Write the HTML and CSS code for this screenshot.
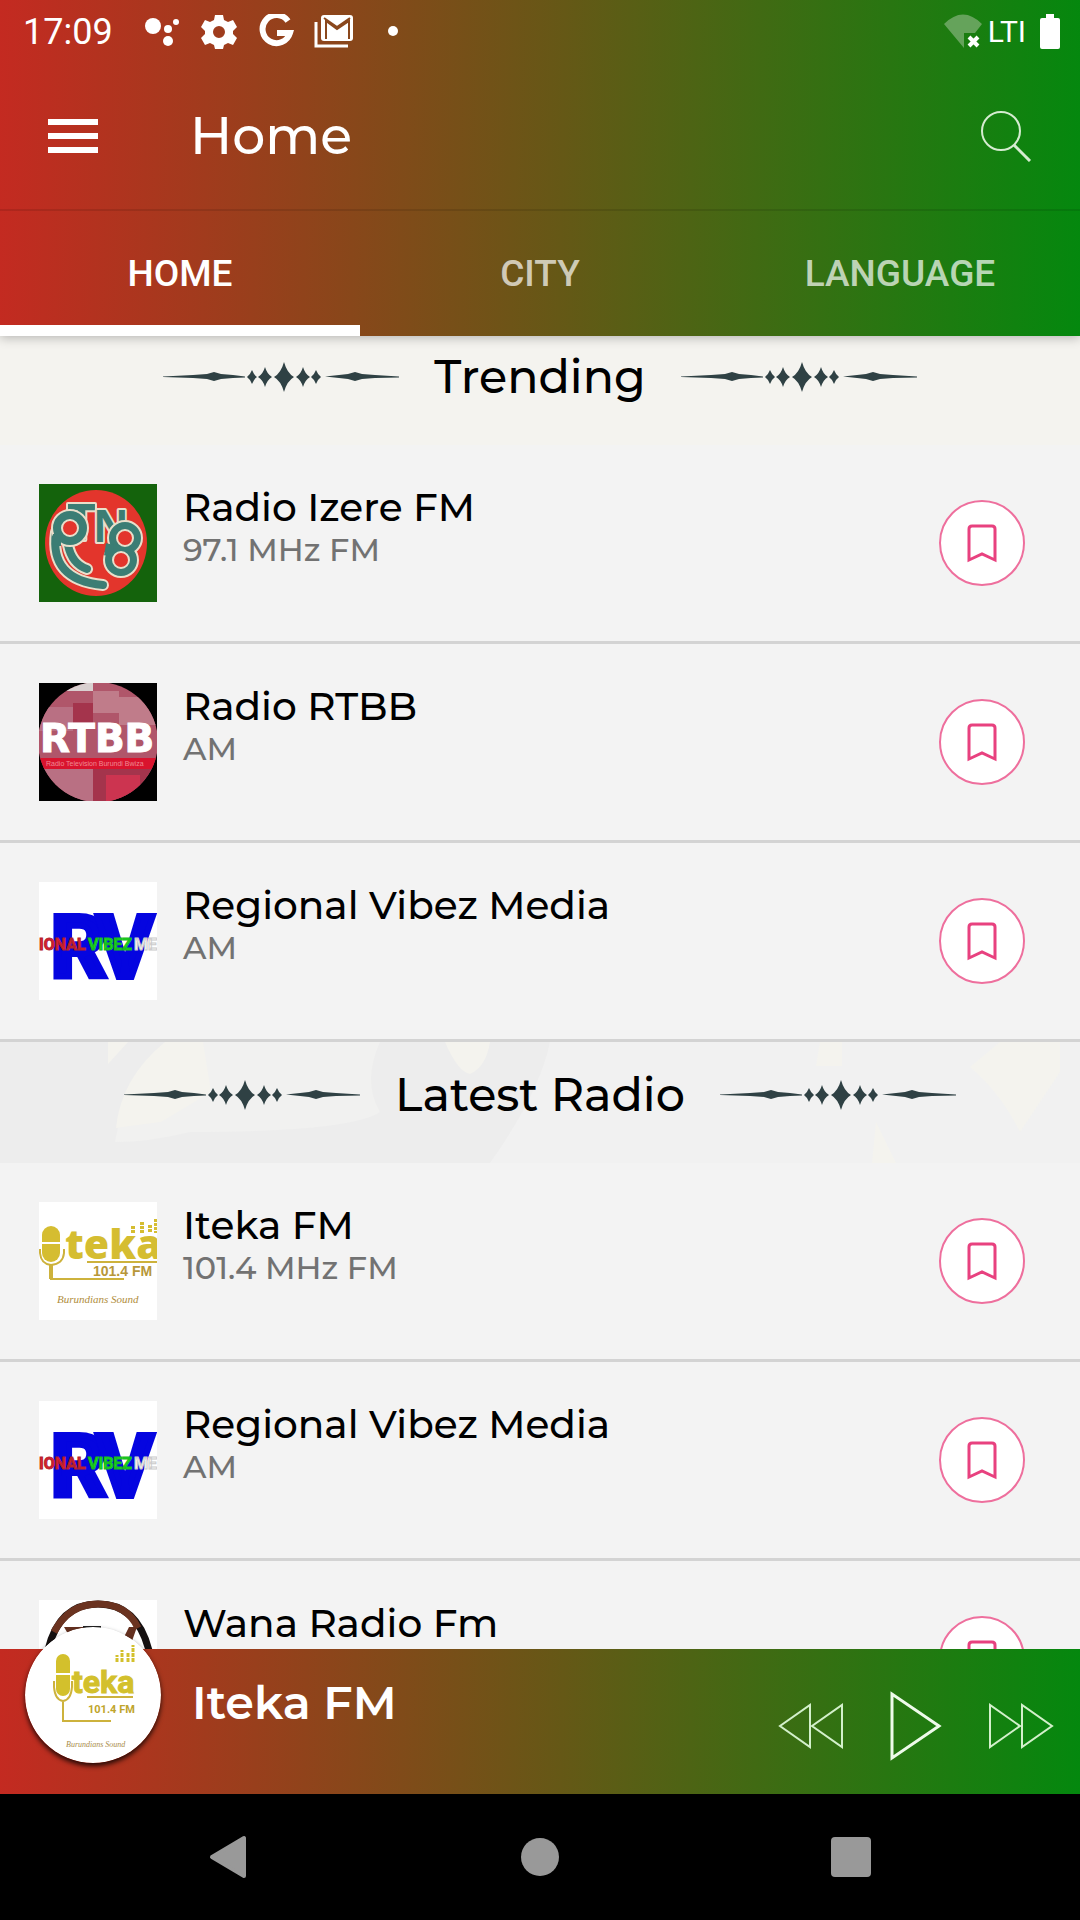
FILE: index.html
```
<!DOCTYPE html>
<html lang="en">
<head>
    <meta charset="UTF-8">
    <meta name="viewport" content="width=device-width, initial-scale=1.0">
    <title>Home</title>
    <link rel="stylesheet" href="styles.css">
</head>
<body>
    <!-- shared artwork -->
    <svg class="sprites" aria-hidden="true">
        <symbol id="bookmark" viewBox="0 0 32 40">
            <path d="M3 37V6q0-3 3-3h20q3 0 3 3v31l-13-6z" fill="none" stroke="#e8417f" stroke-width="3"/>
        </symbol>

        <symbol id="ornament" viewBox="0 0 236 30">
            <g fill="#2f4144">
                <path d="M0 14.500L30 13 44 12 51 10 58 12 70 13 82 14.500v1L70 16 58 17 51 19 44 17 30 16 0 15z"/>
                <path d="M162 14.500L176 13 185 12 192 10 199 12 212 13 236 14.500v1L212 16 199 17 192 19 185 17 176 16z"/>
                <path d="M89 8Q91 13 94 15 91 17 89 22 87 17 84 15 87 13 89 8z"/>
                <path d="M102 5Q104 12 109 15 104 18 102 25 100 18 95 15 100 12 102 5z"/>
                <path d="M121 0Q124 11 131 15 124 19 121 30 118 19 111 15 118 11 121 0z"/>
                <path d="M140 5Q142 12 147 15 142 18 140 25 138 18 133 15 138 12 140 5z"/>
                <path d="M153 8Q155 13 158 15 155 17 153 22 151 17 148 15 151 13 153 8z"/>
            </g>
        </symbol>

        <symbol id="logo-rv" viewBox="0 0 118 118">
            <rect width="118" height="118" fill="#fff"/>
            <g font-family="Roboto, sans-serif" font-weight="bold">
                <g font-size="86" fill="#0505e0" stroke="#0505e0" stroke-width="6">
                    <text x="12" y="95">R</text>
                    <text x="58" y="95">V</text>
                </g>
                <g font-size="16" stroke-width="1">
                    <text x="0" y="68" fill="#e0202a" stroke="#b0202f">IONAL</text>
                    <text x="49" y="68" fill="#18e01c" stroke="#18b822">VIBEZ</text>
                    <text x="95" y="68" fill="#fff" stroke="#ccc">ME</text>
                </g>
            </g>
        </symbol>

        <symbol id="logo-iteka" viewBox="0 0 118 118">
            <rect width="118" height="118" fill="#fff"/>
            <rect x="3" y="24" width="18" height="36" rx="9" fill="#d5bd31"/>
            <path d="M3 41h18" stroke="#fff" stroke-width="2"/>
            <path d="M1 47v4q1 11 11 12 12-1 13-12v-4M12 63v14h73M48 60h70" fill="none" stroke="#cdb23c" stroke-width="2"/>
            <path d="M12 63v14" stroke="#cdb23c" stroke-width="4"/>
            <path d="M94 24v7M103 20v11M111 23v8M117 17v14" stroke="#d5bd31" stroke-width="4" stroke-dasharray="3 1"/>
            <g font-family="Open Sans, sans-serif" fill="#d5bd31">
                <text x="26" y="57" font-size="41" font-weight="800">teka</text>
                <text x="54" y="74" font-family="Liberation Sans, sans-serif" font-size="14" font-weight="bold" fill="#b79739">101.4 FM</text>
                <text x="18" y="101" font-family="Liberation Serif, serif" font-size="11" font-style="italic" fill="#b08d3c">Burundians Sound</text>
            </g>
        </symbol>
    </svg>

    <header class="header">
        <div class="status-bar">
            <span class="clock">17:09</span>
            <svg class="notifications" viewBox="0 0 260 36" aria-hidden="true">
                <g fill="#fff">
                    <circle cx="9" cy="12" r="8"/>
                    <circle cx="24" cy="15" r="4"/>
                    <circle cx="24" cy="27" r="5"/>
                    <circle cx="32" cy="8" r="3"/>
                    <path fill-rule="evenodd" d="M71 1h8l1 5 4 2 5-2 4 7-4 4v3l4 4-4 7-5-2-4 2-1 4h-8l-1-4-4-2-5 2-4-7 4-4v-3l-4-4 4-7 5 2 4-2zM75 12a6 6 0 1 0 0 12a6 6 0 1 0 0-12z"/>
                    <path d="M180 1h26q3 0 3 3v20q0 3-3 3h-26q-3 0-3-3V4q0-3 3-3z"/>
                    <circle cx="249" cy="17" r="5"/>
                </g>
                <path d="M144 7A14 14 0 1 0 146 19H133" fill="none" stroke="#fff" stroke-width="6"/>
                <path d="M182 25V7l11 8 12-8v18M180 4l13 9 13-9" fill="none" stroke="#8a471c" stroke-width="2"/>
                <path d="M172 8v24h32" fill="none" stroke="#fff" stroke-width="3"/>
            </svg>
            <svg class="wifi" viewBox="0 0 40 36" aria-hidden="true">
                <path d="M0 10Q19-9 38 10L31 19H20V34z" fill="#65a35b"/>
                <path d="M25 23l9 9M34 23l-9 9" stroke="#fff" stroke-width="4"/>
            </svg>
            <span class="network">LTI</span>
            <svg class="battery" viewBox="0 0 20 36" aria-hidden="true">
                <path d="M6 0h8v4h4q2 0 2 2v27q0 2-2 2H2q-2 0-2-2V6q0-2 2-2h4z" fill="#fff"/>
            </svg>
        </div>

        <div class="toolbar">
            <button class="icon-button" type="button" aria-label="Open menu">
                <svg width="50" height="36" viewBox="0 0 50 36"><path d="M0 4h50M0 18h50M0 32h50" stroke="#fff" stroke-width="6"/></svg>
            </button>
            <h1>Home</h1>
            <button class="icon-button" type="button" aria-label="Search">
                <svg width="52" height="52" viewBox="0 0 52 52"><g fill="none" stroke="#d5ecd0" stroke-width="2"><circle cx="21" cy="21" r="19"/><path d="M34 35l16 16" stroke-width="3"/></g></svg>
            </button>
        </div>

        <nav class="tabs">
            <a class="tab active" href="#home">Home</a>
            <a class="tab" href="#city">City</a>
            <a class="tab" href="#language">Language</a>
        </nav>
    </header>

    <main class="content">
        <section class="trending" id="home">
            <div class="section-title">
                <svg class="ornament" aria-hidden="true"><use href="#ornament"/></svg>
                <h2>Trending</h2>
                <svg class="ornament" aria-hidden="true"><use href="#ornament"/></svg>
            </div>

            <ul class="stations">
                <li class="station">
                    <svg class="thumb" viewBox="0 0 118 118" aria-hidden="true">
                        <rect width="118" height="118" fill="#14630c"/>
                        <ellipse cx="57" cy="59" rx="51" ry="53" fill="#e3352c"/>
                        <!-- tails of the R sweep round the disc -->
                        <g fill="none" stroke-linecap="round">
                            <path d="M17 48Q10 96 64 101M29 61Q33 80 48 85" stroke="#e9dfcb" stroke-width="12"/>
                            <path d="M17 48Q10 96 64 101M29 61Q33 80 48 85" stroke="#3b7d74" stroke-width="8"/>
                        </g>
                        <g font-family="Open Sans, sans-serif" font-weight="bold" fill="#3b7d74" stroke="#e9dfcb" stroke-width="4" paint-order="stroke" stroke-linejoin="round">
                            <text x="28" y="56" font-size="50">T</text>
                            <text x="54" y="58" font-size="44">N</text>
                        </g>
                        <!-- bowls of the R and the B -->
                        <g fill="#e3352c">
                            <g stroke="#e9dfcb" stroke-width="14">
                                <circle cx="31" cy="44" r="12"/>
                                <circle cx="86" cy="54" r="11"/>
                                <circle cx="82" cy="76" r="11"/>
                            </g>
                            <g stroke="#3b7d74" stroke-width="10">
                                <circle cx="31" cy="44" r="12"/>
                                <circle cx="86" cy="54" r="11"/>
                                <circle cx="82" cy="76" r="11"/>
                            </g>
                            <g stroke="#e9dfcb" stroke-width="2">
                                <circle cx="31" cy="44" r="8"/>
                                <circle cx="86" cy="54" r="8"/>
                                <circle cx="82" cy="76" r="8"/>
                            </g>
                        </g>
                        <path d="M18 50v12M71 60l-2 12" stroke="#3b7d74" stroke-width="8"/>
                    </svg>
                    <div class="info">
                        <h3>Radio Izere FM</h3>
                        <p>97.1 MHz FM</p>
                    </div>
                    <button class="bookmark" type="button" aria-label="Bookmark Radio Izere FM"><svg><use href="#bookmark"/></svg></button>
                </li>
                <li class="station">
                    <svg class="thumb" viewBox="0 0 118 118" aria-hidden="true">
                        <clipPath id="disc"><circle cx="59" cy="59" r="60"/></clipPath>
                        <rect width="118" height="118" fill="#000"/>
                        <g clip-path="url(#disc)">
                            <rect width="118" height="118" fill="#b0566a"/>
                            <path d="M0 0h54v8H0z" fill="#d9d0d0"/>
                            <path d="M54 8h26v22H54zM80 14h38v28H80z" fill="#c07c8a"/>
                            <path d="M0 24h34v24H0zM0 84h54v34H0z" fill="#b97083"/>
                            <path d="M34 20h20v20H34zM54 84h64v34H54z" fill="#a4344c"/>
                            <path d="M67 92h34v26H67z" fill="#cc3450"/>
                            <rect y="75" width="118" height="11" fill="#d9142e"/>
                        </g>
                        <g fill="#fff">
                            <text x="1" y="69" font-family="DejaVu Sans, sans-serif" font-size="39" font-weight="bold" stroke="#fff">RTBB</text>
                            <text x="7" y="83" font-family="Liberation Sans, sans-serif" font-size="7" fill="#f08a94">Radio Television Burundi Bwiza</text>
                        </g>
                    </svg>
                    <div class="info">
                        <h3>Radio RTBB</h3>
                        <p>AM</p>
                    </div>
                    <button class="bookmark" type="button" aria-label="Bookmark Radio RTBB"><svg><use href="#bookmark"/></svg></button>
                </li>
                <li class="station">
                    <svg class="thumb" aria-hidden="true"><use href="#logo-rv"/></svg>
                    <div class="info">
                        <h3>Regional Vibez Media</h3>
                        <p>AM</p>
                    </div>
                    <button class="bookmark" type="button" aria-label="Bookmark Regional Vibez Media"><svg><use href="#bookmark"/></svg></button>
                </li>
            </ul>
        </section>

        <section class="latest">
            <div class="section-title">
                <svg class="backdrop" viewBox="0 0 1080 121" preserveAspectRatio="none" aria-hidden="true">
                    <rect width="1080" height="121" fill="#f1f1f1"/>
                    <path d="M0 0h550q-10 50-60 121H0z" fill="#ededed"/>
                    <path d="M170 0h210q-18 40 0 70-30 20-190 20-40 10-75 10 10-60 55-100z" fill="#f1f1f0"/>
                    <path d="M108 0h20l-20 22zM165 0h38l8 50-50 30-45 6q5-50 49-86zM445 0h45q-4 25-20 32-12-2-25-32zM1000 0h60v30l-40 60q-20-40-50-65zM820 0h22v24h-26zM876 80l20 41h-24z" fill="#f4f3ee"/>
                </svg>
                <svg class="ornament" aria-hidden="true"><use href="#ornament"/></svg>
                <h2>Latest Radio</h2>
                <svg class="ornament" aria-hidden="true"><use href="#ornament"/></svg>
            </div>

            <ul class="stations">
                <li class="station">
                    <svg class="thumb" aria-hidden="true"><use href="#logo-iteka"/></svg>
                    <div class="info">
                        <h3>Iteka FM</h3>
                        <p>101.4 MHz FM</p>
                    </div>
                    <button class="bookmark" type="button" aria-label="Bookmark Iteka FM"><svg><use href="#bookmark"/></svg></button>
                </li>
                <li class="station">
                    <svg class="thumb" aria-hidden="true"><use href="#logo-rv"/></svg>
                    <div class="info">
                        <h3>Regional Vibez Media</h3>
                        <p>AM</p>
                    </div>
                    <button class="bookmark" type="button" aria-label="Bookmark Regional Vibez Media"><svg><use href="#bookmark"/></svg></button>
                </li>
                <li class="station">
                    <svg class="thumb" viewBox="0 0 118 118" aria-hidden="true">
                        <rect width="118" height="118" fill="#fff"/>
                        <path d="M7 60Q16 4 59 4t53 56" fill="none" stroke="#151010" stroke-width="7"/>
                        <path d="M15 32Q30 4 59 4t40 24" fill="none" stroke="#6b3320" stroke-width="7"/>
                        <path d="M25 27h30l-8 12H32zM84 39l6-12h8l-5 14z" fill="#64301f"/>
                        <path d="M44 26h18v5H44z" fill="#222"/>
                    </svg>
                    <div class="info">
                        <h3>Wana Radio Fm</h3>
                    </div>
                    <button class="bookmark" type="button" aria-label="Bookmark Wana Radio Fm"><svg><use href="#bookmark"/></svg></button>
                </li>
            </ul>
        </section>
    </main>

    <footer class="player">
        <svg class="cover" viewBox="0 0 136 136" aria-hidden="true">
            <circle cx="68" cy="68" r="68" fill="#fff"/>
            <rect x="31" y="27" width="14" height="42" rx="7" fill="#d3c02c"/>
            <path d="M31 47h14" stroke="#fff" stroke-width="2"/>
            <path d="M29 54v6q1 13 9 14 8-1 9-14v-6M38 74v20h48M62 70h46" fill="none" stroke="#cdb23c" stroke-width="2"/>
            <path d="M92 35v-7M97 35V23M103 35v-9M108 35V18" stroke="#d3c02c" stroke-width="3" stroke-dasharray="4 1"/>
            <text x="47" y="66" font-family="Roboto, sans-serif" font-size="32" font-weight="bold" fill="#d3c02c" stroke="#d3c02c">teka</text>
            <text x="63" y="86" font-family="Roboto, sans-serif" font-size="11" font-weight="bold" fill="#c0a52c">101.4 FM</text>
            <text x="41" y="120" font-family="Liberation Serif, serif" font-size="8" font-style="italic" fill="#a98c4a">Burundians Sound</text>
        </svg>
        <h2 class="now-playing">Iteka FM</h2>
        <div class="controls">
            <button type="button" aria-label="Previous">
                <svg width="66" height="48" viewBox="0 0 66 48"><path d="M32 3v42L2 24zM64 3v42L34 24z" fill="none" stroke="#d3f0cb" stroke-width="2"/></svg>
            </button>
            <button type="button" aria-label="Play">
                <svg width="54" height="72" viewBox="0 0 54 72"><path d="M3 4v64l47-32z" fill="none" stroke="#eefbea" stroke-width="3"/></svg>
            </button>
            <button type="button" aria-label="Next">
                <svg width="66" height="48" viewBox="0 0 66 48"><path d="M2 3v42l30-21zM34 3v42l30-21z" fill="none" stroke="#d3f0cb" stroke-width="2"/></svg>
            </button>
        </div>
    </footer>

    <div class="system-nav">
        <button type="button" aria-label="Back">
            <svg width="42" height="44" viewBox="0 0 42 44"><path d="M4 22L36 3v38z" fill="#999" stroke="#999" stroke-width="4" stroke-linejoin="round"/></svg>
        </button>
        <button type="button" aria-label="Home screen">
            <svg width="40" height="40" viewBox="0 0 40 40"><circle cx="20" cy="20" r="19" fill="#999"/></svg>
        </button>
        <button type="button" aria-label="Recent apps">
            <svg width="40" height="40" viewBox="0 0 40 40"><rect width="40" height="40" rx="4" fill="#999"/></svg>
        </button>
    </div>
</body>
</html>
```
FILE: styles.css
```
* {
    box-sizing: border-box;
}

body {
    margin: 0;
    height: 100vh;
    display: flex;
    flex-direction: column;
    overflow: hidden;
    font-family: Montserrat, Inter, sans-serif;
    background-color: #f3f3f3;
    color: #000;
}

h1,
h2,
h3,
p,
ul {
    margin: 0;
    padding: 0;
    font-weight: 500;
}

button {
    padding: 0;
    border: none;
    background: none;
    cursor: pointer;
}

svg {
    display: block;
    flex-shrink: 0;
}

.sprites {
    position: absolute;
    width: 0;
    height: 0;
}

/* Header */
.header,
.player {
    background: linear-gradient(91deg, #c42a21 0%, #655816 52%, #04880e 100%);
    color: #fff;
    z-index: 1;
}

.header {
    box-shadow: 0 2px 10px rgba(0, 0, 0, 0.25);
}

.status-bar {
    height: 63px;
    padding: 0 20px 0 23px;
    display: flex;
    align-items: center;
    font-family: Roboto, sans-serif;
}

.clock {
    font-size: 36px;
}

.notifications {
    width: 260px;
    height: 36px;
    margin: 0 auto 0 31px;
}

.wifi {
    width: 40px;
    height: 36px;
}

.network {
    margin: 0 14px 0 4px;
    font-size: 30px;
}

.battery {
    width: 20px;
    height: 36px;
}

.toolbar {
    height: 148px;
    padding: 0 48px;
    display: flex;
    align-items: center;
    border-bottom: 2px solid rgba(0, 0, 0, 0.1);
}

.toolbar h1 {
    flex: 1;
    padding-left: 92px;
    font-size: 52px;
    line-height: 64px;
}

.tabs {
    display: flex;
}

.tab {
    flex: 1;
    height: 125px;
    display: flex;
    align-items: center;
    justify-content: center;
    border-top: 11px solid transparent;
    border-bottom: 11px solid transparent;
    font-family: Roboto, sans-serif;
    font-size: 37px;
    font-weight: 500;
    text-transform: uppercase;
    text-decoration: none;
    color: rgba(255, 255, 255, 0.7);
}

.tab.active {
    color: #fff;
    border-bottom-color: #fff;
}

/* Station lists */
.content {
    flex: 1;
    min-height: 0;
    overflow-y: auto;
    scrollbar-width: none;
}

/* list rests slightly scrolled under the tabs */
.trending {
    margin-top: -12px;
}

.section-title {
    position: relative;
    height: 121px;
    padding: 24px 0 39px;
    display: flex;
    align-items: center;
    justify-content: center;
    gap: 35px;
}

.trending .section-title {
    background-color: #f4f3ef;
}

.section-title h2 {
    position: relative;
    font-size: 46px;
    line-height: 58px;
}

.backdrop {
    position: absolute;
    inset: 0;
    width: 100%;
    height: 100%;
}

.ornament {
    position: relative;
    width: 236px;
    height: 30px;
}

.stations {
    list-style: none;
}

.station {
    display: flex;
    align-items: center;
    gap: 26px;
    padding: 39px 55px 39px 39px;
    border-bottom: 3px solid #d3d3d3;
}

.thumb {
    width: 118px;
    height: 118px;
}

.info {
    flex: 1;
    align-self: flex-start;
}

.info h3 {
    font-size: 39px;
    line-height: 47px;
}

.info p {
    font-size: 32px;
    line-height: 38px;
    color: #727272;
}

.bookmark {
    width: 86px;
    height: 86px;
    display: flex;
    align-items: center;
    justify-content: center;
    border: 2px solid #ee6f9d;
    border-radius: 50%;
    background-color: #fff;
}

.bookmark svg {
    width: 32px;
    height: 40px;
}

/* Player */
.player {
    height: 145px;
    padding: 0 26px 0 25px;
    display: flex;
    align-items: center;
}

.cover {
    width: 136px;
    height: 136px;
    margin-bottom: 54px;
    border-radius: 50%;
    box-shadow: 0 3px 5px rgba(0, 0, 0, 0.8);
}

.now-playing {
    flex: 1;
    padding: 0 0 38px 31px;
    font-size: 46px;
    font-weight: 600;
    line-height: 58px;
}

.controls {
    display: flex;
    align-items: center;
    gap: 45px;
    padding-top: 8px;
}

/* System navigation */
.system-nav {
    height: 126px;
    display: flex;
    justify-content: center;
    background-color: #000;
}

.system-nav button {
    width: 311px;
    display: flex;
    align-items: center;
    justify-content: center;
}
```
